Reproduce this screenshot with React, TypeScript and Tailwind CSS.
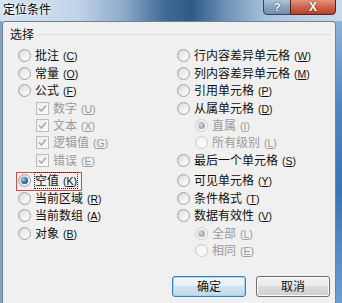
import type { ReactNode } from "react";

const font = { fontFamily: '"Noto Sans CJK SC", "Liberation Sans", sans-serif' };

function Radio({ checked = false, disabled = false }: { checked?: boolean; disabled?: boolean }) {
  return (
    <span
      className={`flex h-[13px] w-[13px] shrink-0 items-center justify-center rounded-full border ${
        disabled
          ? "border-[#cdcdcd] bg-[linear-gradient(135deg,#ececec,#fbfbfb)]"
          : "border-[#a3a4a4] bg-[linear-gradient(135deg,#d2d2d2,#f9f9f9)]"
      }`}
    >
      {checked ? (
        disabled ? (
          <span className="h-[7px] w-[7px] rounded-full bg-[radial-gradient(circle_at_35%_35%,#d8d8d8,#8c8c8c)]" />
        ) : (
          <span className="h-[7px] w-[7px] rounded-full bg-[radial-gradient(circle_at_35%_35%,#9fd0f2,#2b6cae_55%,#123f74)]" />
        )
      ) : (
        <span
          className={`h-[9px] w-[9px] rounded-full ${
            disabled
              ? "bg-[linear-gradient(135deg,#f2f2f2,#fdfdfd)]"
              : "bg-[linear-gradient(135deg,#dedede,#ffffff)]"
          }`}
        />
      )}
    </span>
  );
}

function Check() {
  return (
    <span className="flex h-[13px] w-[13px] shrink-0 items-center justify-center border border-[#bdbdbd] bg-[linear-gradient(135deg,#ececec,#fcfcfc)]">
      <svg width="9" height="9" viewBox="0 0 9 9">
        <polyline points="1,4.5 3.5,7 8,1.5" fill="none" stroke="#a9a9a9" strokeWidth="1.6" />
      </svg>
    </span>
  );
}

function Label({ text, k, disabled = false }: { text: string; k: string; disabled?: boolean }) {
  return (
    <span className={`flex items-baseline whitespace-nowrap ${disabled ? "text-[#9a9a9a]" : "text-[#111]"}`}>
      <span className="text-[12px] leading-[14px]">{text}</span>
      <span className="ml-[4px] text-[10.5px] leading-[14px]" style={{ fontFamily: '"Liberation Sans", sans-serif' }}>
        (<u>{k}</u>)
      </span>
    </span>
  );
}

function Row({ children, sub = false, extra = false }: { children: ReactNode; sub?: boolean; extra?: boolean }) {
  return (
    <div className={`relative flex h-[17.4px] items-center gap-[4px] ${sub ? "pl-[18px]" : ""} ${extra ? "mt-[3.2px]" : ""}`}>
      {children}
    </div>
  );
}

export default function App() {
  return (
    <div
      className="relative h-[303px] w-[342px] overflow-hidden bg-[linear-gradient(90deg,#d4e2ef_0%,#c2d5e8_22%,#8eaccb_36%,#416b98_48%,#2f5a88_56%,#6e91b7_66%,#a9c3dd_78%,#c9dbec_100%)]"
      style={font}
    >
      {/* title bar */}
      <div className="relative h-[21px]">
        <span className="absolute left-[3px] top-[2px] text-[12px] leading-[14px] text-black [text-shadow:0_0_6px_#ffffff,0_0_3px_#ffffff]">
          定位条件
        </span>
        <div className="absolute left-[263px] top-[-3px] flex h-[18px] w-[28px] items-center justify-center rounded-bl-[4px] border border-[#34465c] bg-[linear-gradient(180deg,#b9cde0,#8ea8c2_50%,#6f8eae)]">
          <span className="mt-[2px] text-[11px] font-bold leading-none text-white [text-shadow:0_0_2px_#1d2c3d]" style={{ fontFamily: '"Liberation Sans", sans-serif' }}>
            ?
          </span>
        </div>
        <div className="absolute left-[290px] top-[-3px] flex h-[18px] w-[46px] items-center justify-center rounded-br-[4px] border border-[#5a2118] bg-[linear-gradient(180deg,#e9a48f,#d26a52_50%,#b8402a)]">
          <span className="mt-[2px] text-[12px] font-bold leading-none text-white [text-shadow:0_0_2px_#5a1a10]" style={{ fontFamily: '"Liberation Sans", sans-serif' }}>
            X
          </span>
        </div>
      </div>

      {/* body with frame */}
      <div className="flex h-[282px]">
        <div className="w-[2px] bg-[#7ea3c9]" />
        <div className="flex-1 rounded-t-[3px] border-x border-t border-[#6f8193] bg-[#f0f0f0]">
          <div className="mt-[5px] flex h-[14px] items-center pl-[7px] pr-[4px]">
            <span className="text-[12px] leading-[14px] text-[#111]">选择</span>
            <div className="ml-[3px] h-px flex-1 bg-[#d5dfe5]" />
          </div>

          <div className="mt-[6.3px] grid grid-cols-[159px_1fr] items-start pl-[15px]">
            <div className="flex flex-col">
              <Row><Radio /><Label text="批注" k="C" /></Row>
              <Row><Radio /><Label text="常量" k="O" /></Row>
              <Row><Radio /><Label text="公式" k="F" /></Row>
              <Row sub><Check /><Label text="数字" k="U" disabled /></Row>
              <Row sub><Check /><Label text="文本" k="X" disabled /></Row>
              <Row sub><Check /><Label text="逻辑值" k="G" disabled /></Row>
              <Row sub><Check /><Label text="错误" k="E" disabled /></Row>
              <Row extra>
                <span className="absolute left-[-2px] top-[-0.5px] h-[19px] w-[66px] border border-[#d24b4b]" />
                <Radio checked />
                <span className="relative">
                  <Label text="空值" k="K" />
                  <span className="absolute -inset-x-[1px] -inset-y-[1px] border border-dotted border-[#222]" />
                </span>
              </Row>
              <Row><Radio /><Label text="当前区域" k="R" /></Row>
              <Row><Radio /><Label text="当前数组" k="A" /></Row>
              <Row><Radio /><Label text="对象" k="B" /></Row>
            </div>
            <div className="flex flex-col">
              <Row><Radio /><Label text="行内容差异单元格" k="W" /></Row>
              <Row><Radio /><Label text="列内容差异单元格" k="M" /></Row>
              <Row><Radio /><Label text="引用单元格" k="P" /></Row>
              <Row><Radio /><Label text="从属单元格" k="D" /></Row>
              <Row sub><Radio checked disabled /><Label text="直属" k="I" disabled /></Row>
              <Row sub><Radio disabled /><Label text="所有级别" k="L" disabled /></Row>
              <Row><Radio /><Label text="最后一个单元格" k="S" /></Row>
              <Row extra><Radio /><Label text="可见单元格" k="Y" /></Row>
              <Row><Radio /><Label text="条件格式" k="T" /></Row>
              <Row><Radio /><Label text="数据有效性" k="V" /></Row>
              <Row sub><Radio checked disabled /><Label text="全部" k="L" disabled /></Row>
              <Row sub><Radio disabled /><Label text="相同" k="E" disabled /></Row>
            </div>
          </div>

          <div className="ml-[169px] mt-[16.5px] flex gap-[10px]">
            <button className="flex h-[21px] w-[74px] items-center justify-center rounded-[3px] border border-[#3c7fb1] bg-[linear-gradient(180deg,#f4f9fc_0%,#e6f0f7_45%,#d3e3ee_50%,#c4d9e8_100%)] text-[12px] leading-[14px] text-[#111] shadow-[inset_0_0_0_1px_#9fd6f4]">
              确定
            </button>
            <button className="flex h-[21px] w-[74px] items-center justify-center rounded-[3px] border border-[#707070] bg-[linear-gradient(180deg,#f2f2f2_0%,#ebebeb_45%,#dddddd_50%,#cfcfcf_100%)] text-[12px] leading-[14px] text-[#111] shadow-[inset_0_0_0_1px_#fcfcfc]">
              取消
            </button>
          </div>
        </div>
        <div className="w-[6px] bg-[linear-gradient(180deg,#8fb3d9_0%,#4f86c0_30%,#3a74b4_60%,#6e9fd2_100%)]" />
      </div>
    </div>
  );
}
